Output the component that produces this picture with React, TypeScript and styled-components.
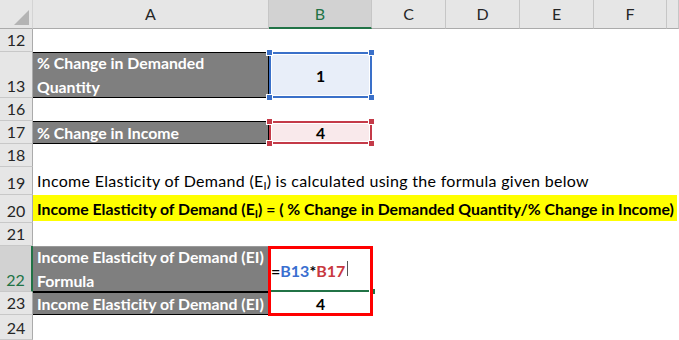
import React from "react";
import styled, { createGlobalStyle, css } from "styled-components";

const FONT = `"Lato", "Liberation Sans", sans-serif`;

const Global = createGlobalStyle`
  html, body { margin: 0; padding: 0; background: #ffffff; }
  body { font-family: ${FONT}; }
`;

const Sheet = styled.div`
  display: grid;
  grid-template-columns: 33px 236px 103px 74px 74px 74px 73px 1fr;
  grid-template-rows: 29px 23px 46px 2px 21px 23px 23px 28px 28px 23px 46px 23px 1fr;
  width: 679px;
  height: 340px;
  overflow: hidden;
  background: #ffffff;
  font-family: ${FONT};
  color: #000;
`;

type Place = { $row: number; $col: number; $span?: number; $rows?: number };

const placed = css<Place>`
  grid-row: ${(p) => p.$row} / span ${(p) => p.$rows ?? 1};
  grid-column: ${(p) => p.$col} / span ${(p) => p.$span ?? 1};
  box-sizing: border-box;
  min-width: 0;
`;

const Corner = styled.div`
  grid-row: 1;
  grid-column: 1;
  box-sizing: border-box;
  background: #e6e6e6;
  border-right: 1px solid #d4d4d4;
  border-bottom: 1px solid #ababab;
  position: relative;
`;

const Triangle = styled.div`
  position: absolute;
  right: 3px;
  bottom: 3px;
  width: 0;
  height: 0;
  border-left: 15px solid transparent;
  border-bottom: 15px solid #b4b4b4;
`;

const ColHeader = styled.div<{ $col: number; $active?: boolean }>`
  grid-row: 1;
  grid-column: ${(p) => p.$col};
  box-sizing: border-box;
  display: flex;
  justify-content: center;
  align-items: flex-end;
  padding-bottom: 5px;
  font-size: 16px;
  background: ${(p) => (p.$active ? "#d2d2d2" : "#e6e6e6")};
  color: ${(p) => (p.$active ? "#217346" : "#262626")};
  border-right: 1px solid #c6c6c6;
  border-bottom: ${(p) => (p.$active ? "2px solid #217346" : "1px solid #ababab")};
  ${(p) => p.$active && "padding-bottom: 4px;"}
`;

const RowHeader = styled.div<{ $row: number; $active?: boolean }>`
  grid-row: ${(p) => p.$row};
  grid-column: 1;
  box-sizing: border-box;
  display: flex;
  justify-content: center;
  align-items: flex-end;
  padding-bottom: 3px;
  font-size: 16px;
  line-height: 17px;
  background: ${(p) => (p.$active ? "#d2d2d2" : "#e6e6e6")};
  color: ${(p) => (p.$active ? "#217346" : "#262626")};
  border-bottom: 1px solid #c8c8c8;
  border-right: ${(p) => (p.$active ? "2px solid #217346" : "1px solid #ababab")};
`;

const LabelCell = styled.div<Place & { $top?: string }>`
  ${placed};
  display: flex;
  align-items: center;
  padding: 0 4px;
  background: #7f7f7f;
  color: #ffffff;
  font-weight: 700;
  font-size: 15.8px;
  line-height: 24px;
  border-top: 1px solid ${(p) => p.$top ?? "#000000"};
  border-bottom: 1px solid #000000;
  border-right: 1px solid #000000;
  white-space: pre-line;
`;

const ValueCell = styled.div<Place & { $tone?: "blue" | "red" | "plain" }>`
  ${placed};
  position: relative;
  display: flex;
  align-items: center;
  justify-content: center;
  font-weight: 700;
  font-size: 15.8px;
  ${(p) =>
    p.$tone === "blue" &&
    css`
      background: #e8eef9;
      border: 2px solid #3a70c9;
      box-shadow: inset 0 0 0 1px #ffffff;
    `}
  ${(p) =>
    p.$tone === "red" &&
    css`
      background: #f9e9eb;
      border: 2px solid #c43a48;
      box-shadow: inset 0 0 0 1px #ffffff;
    `}
`;

const Handle = styled.span<{ $color: string; $x: "left" | "right"; $y: "top" | "bottom" }>`
  position: absolute;
  width: 5px;
  height: 5px;
  background: ${(p) => p.$color};
  outline: 1px solid #ffffff;
  ${(p) => (p.$x === "left" ? "left: -4px;" : "right: -4px;")}
  ${(p) => (p.$y === "top" ? "top: -4px;" : "bottom: -4px;")}
`;

const TextCell = styled.div<Place & { $bold?: boolean; $highlight?: boolean }>`
  ${placed};
  display: block;
  padding: 0 4px;
  line-height: 27px;
  white-space: nowrap;
  font-size: ${(p) => (p.$bold ? "15.8px" : "16px")};
  letter-spacing: ${(p) => (p.$bold ? "0" : "0.3px")};
  font-weight: ${(p) => (p.$bold ? 700 : 400)};
  background: ${(p) => (p.$highlight ? "#ffff00" : "transparent")};
  ${(p) => p.$highlight && "margin-right: 2px; margin-bottom: 2px; line-height: 25px; padding-top: 1px;"}
`;

const Sub = styled.sub`
  font-size: 11px;
  vertical-align: -3px;
  line-height: 0;
  letter-spacing: 0;
`;

const FormulaCell = styled.div<Place>`
  ${placed};
  position: relative;
  display: flex;
  align-items: flex-start;
  padding: 15px 0 0 2px;
  font-size: 16px;
  font-weight: 700;
  border-bottom: 2px solid #217346;
`;

const Ref = styled.span<{ $color: string }>`
  color: ${(p) => p.$color};
`;

const Caret = styled.span`
  display: inline-block;
  width: 1px;
  height: 15px;
  margin-left: 2px;
  background: #555;
`;

const ActiveHandle = styled.span`
  position: absolute;
  right: -3px;
  bottom: -4px;
  width: 5px;
  height: 5px;
  background: #217346;
  outline: 1px solid #ffffff;
`;

const Annotation = styled.div<Place>`
  ${placed};
  margin: 0 -1px -1px -1px;
  border: 3px solid #ff0000;
  pointer-events: none;
  z-index: 2;
`;

const cols = ["A", "B", "C", "D", "E", "F", ""];
const rows: { n: string; r: number; active?: boolean }[] = [
  { n: "12", r: 2 },
  { n: "13", r: 3 },
  { n: "", r: 4 },
  { n: "16", r: 5 },
  { n: "17", r: 6 },
  { n: "18", r: 7 },
  { n: "19", r: 8 },
  { n: "20", r: 9 },
  { n: "21", r: 10 },
  { n: "22", r: 11, active: true },
  { n: "23", r: 12 },
  { n: "24", r: 13 },
];

const corners: ["left" | "right", "top" | "bottom"][] = [
  ["left", "top"],
  ["right", "top"],
  ["left", "bottom"],
  ["right", "bottom"],
];

export default function App() {
  return (
    <>
      <Global />
      <Sheet>
        <Corner>
          <Triangle />
        </Corner>
        {cols.map((c, i) => (
          <ColHeader key={i} $col={i + 2} $active={c === "B"}>
            {c}
          </ColHeader>
        ))}
        {rows.map((r) => (
          <RowHeader key={r.r} $row={r.r} $active={r.active}>
            {r.n}
          </RowHeader>
        ))}

        <LabelCell $row={3} $col={2}>{"% Change in Demanded\nQuantity"}</LabelCell>
        <ValueCell $row={3} $col={3} $tone="blue">
          1
          {corners.map(([x, y]) => (
            <Handle key={x + y} $color="#3a70c9" $x={x} $y={y} />
          ))}
        </ValueCell>

        <LabelCell $row={6} $col={2}>% Change in Income</LabelCell>
        <ValueCell $row={6} $col={3} $tone="red">
          4
          {corners.map(([x, y]) => (
            <Handle key={x + y} $color="#c43a48" $x={x} $y={y} />
          ))}
        </ValueCell>

        <TextCell $row={8} $col={2} $span={6}>
          Income Elasticity of Demand (E<Sub>I</Sub>) is calculated using the formula given below
        </TextCell>
        <TextCell $row={9} $col={2} $span={7} $bold $highlight>
          Income Elasticity of Demand (E<Sub>I</Sub>) = ( % Change in Demanded Quantity/% Change in Income)
        </TextCell>

        <LabelCell $row={11} $col={2} $top="#9a9a9a">{"Income Elasticity of Demand (EI)\nFormula"}</LabelCell>
        <FormulaCell $row={11} $col={3}>
          =<Ref $color="#3a6fd0">B13</Ref>*<Ref $color="#c8383f">B17</Ref>
          <Caret />
          <ActiveHandle />
        </FormulaCell>

        <LabelCell $row={12} $col={2} $top="#000000">Income Elasticity of Demand (EI)</LabelCell>
        <ValueCell $row={12} $col={3} $tone="plain">4</ValueCell>

        <Annotation $row={11} $col={3} $rows={2} />
      </Sheet>
    </>
  );
}
